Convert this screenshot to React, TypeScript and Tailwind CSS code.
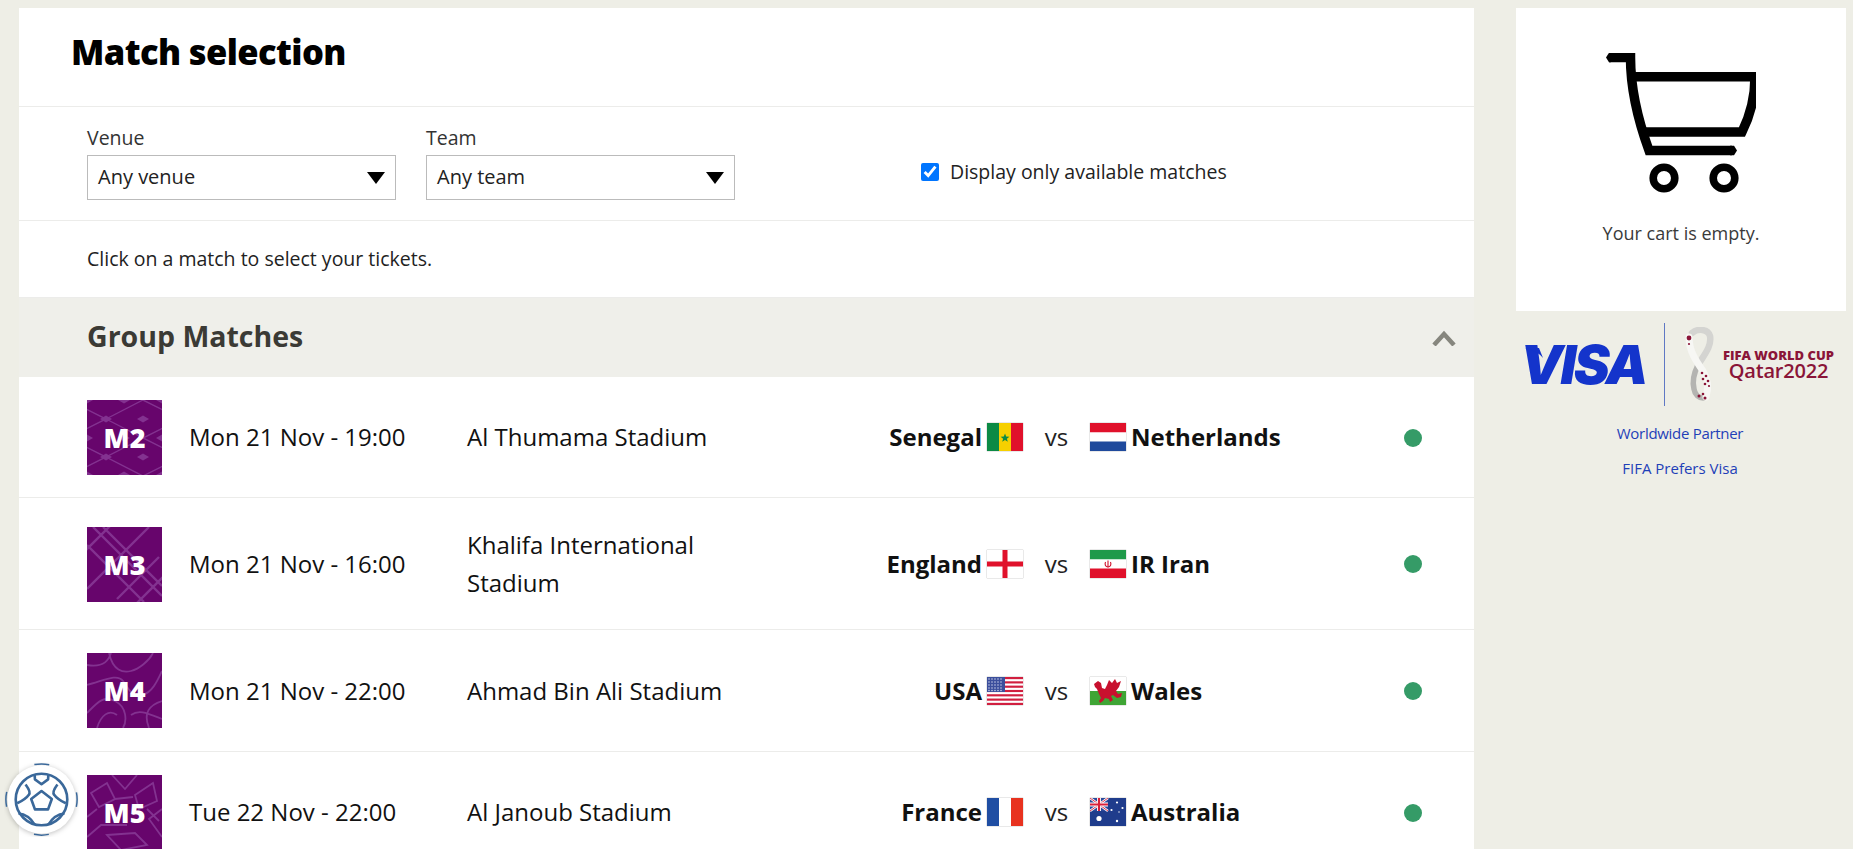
const OPEN = "font-['Open_Sans',sans-serif]"

function Flag({ code }: { code: string }) {
  const body: Record<string, React.ReactNode> = {
    sn: (
      <>
        <rect width="12" height="28" fill="#0b8a45" />
        <rect x="12" width="12" height="28" fill="#f6d000" />
        <rect x="24" width="12" height="28" fill="#e0112b" />
        <polygon points="18,10.5 19.2,13.6 22.4,13.7 19.9,15.7 20.8,18.8 18,17 15.2,18.8 16.1,15.7 13.6,13.7 16.8,13.6" fill="#0b8a45" />
      </>
    ),
    nl: (
      <>
        <rect width="36" height="9.5" fill="#e0112b" />
        <rect y="9.5" width="36" height="9" fill="#fff" />
        <rect y="18.5" width="36" height="9.5" fill="#1f4a9c" />
      </>
    ),
    en: (
      <>
        <rect width="36" height="28" fill="#fff" />
        <rect x="15.5" width="5" height="28" fill="#e0112b" />
        <rect y="11.5" width="36" height="5" fill="#e0112b" />
      </>
    ),
    ir: (
      <>
        <rect width="36" height="9.5" fill="#1f9a4a" />
        <rect y="9.5" width="36" height="9" fill="#fff" />
        <rect y="18.5" width="36" height="9.5" fill="#e0112b" />
        <path d="M18 10.5v7M15.5 12c-1 2.5 0 4.5 2 5M20.5 12c1 2.5 0 4.5-2 5" fill="none" stroke="#d0102b" strokeWidth="1.1" />
      </>
    ),
    us: (
      <>
        <rect width="36" height="28" fill="#fff" />
        {[0, 2, 4, 6, 8, 10, 12].map((i) => (
          <rect key={i} y={i * 2.154} width="36" height="2.154" fill="#d11f3f" />
        ))}
        <rect width="18" height="15" fill="#3c4f9c" />
        {[2, 5, 8, 11, 14].map((x) =>
          [2, 5, 8, 11, 13.5].map((y) => <circle key={x + "-" + y} cx={x} cy={y} r="0.7" fill="#dfe4f5" />),
        )}
      </>
    ),
    wa: (
      <>
        <rect width="36" height="14" fill="#fff" />
        <rect y="14" width="36" height="14" fill="#3fa535" />
        <path d="M4 7L8 4L11 6L12 11L15 12L17 8L19 3L22 6L25 2L27 6L31 4L29 10L26 14L28 17L32 16L31 20L27 21L23 18L21 19L23 23L20 25L19 22L15 21L13 24L10 26L9 24L11 21L9 17L7 12L5 10Z" fill="#c8102e" />
      </>
    ),
    fr: (
      <>
        <rect width="12" height="28" fill="#1f4ea3" />
        <rect x="12" width="12" height="28" fill="#fff" />
        <rect x="24" width="12" height="28" fill="#e8321f" />
      </>
    ),
    au: (
      <>
        <rect width="36" height="28" fill="#1f3c8c" />
        <rect width="18" height="13" fill="#2a4a9c" />
        <path d="M0 0l18 13M18 0L0 13" stroke="#fff" strokeWidth="2.4" />
        <path d="M0 0l18 13M18 0L0 13" stroke="#d9203a" strokeWidth="0.9" />
        <path d="M9 0v13M0 6.5h18" stroke="#fff" strokeWidth="4" />
        <path d="M9 0v13M0 6.5h18" stroke="#d9203a" strokeWidth="2.2" />
        <circle cx="9" cy="20.5" r="2.6" fill="#fff" />
        <circle cx="27" cy="4.5" r="1.1" fill="#fff" />
        <circle cx="27" cy="23" r="1.2" fill="#fff" />
        <circle cx="21.5" cy="12" r="1.1" fill="#fff" />
        <circle cx="32.5" cy="10" r="1.1" fill="#fff" />
        <circle cx="29" cy="14" r="0.7" fill="#fff" />
      </>
    ),
  }
  return (
    <svg viewBox="0 0 36 28" className="w-[36px] h-[28px] shrink-0 shadow-[0_0_1px_rgba(0,0,0,0.5)]">
      {body[code]}
    </svg>
  )
}

function TilePattern({ n }: { n: number }) {
  const stroke = "#833290"
  if (n === 2) {
    return (
      <svg viewBox="0 0 75 75" className="absolute inset-0 w-full h-full" fill="none" stroke={stroke} strokeWidth="1.4">
        <path d="M-19 0L19 19L-19 38L19 57L-19 76M19 19L56 0M19 19L56 38L19 57L56 76M56 0L94 19L56 38L94 57L56 76" />
        <g fill={stroke} stroke="none">
          {[0, 19, 38, 57, 75].map((y, i) =>
            [0, 19, 37, 56, 75]
              .filter((_, j) => (i + j) % 2 === 0)
              .map((x) => <polygon key={x + "-" + y} points={`${x - 6},${y} ${x},${y - 3.5} ${x + 6},${y} ${x},${y + 3.5}`} />),
          )}
        </g>
      </svg>
    )
  }
  if (n === 3) {
    return (
      <svg viewBox="0 0 75 75" className="absolute inset-0 w-full h-full" fill="none" stroke={stroke} strokeWidth="2.4">
        <path d="M6 0L75 69M16 0L75 59M0 18L57 75M-10 32L32 -10M10 52L52 10M30 72L72 30M44 82L82 44M0 62L62 0" />
      </svg>
    )
  }
  if (n === 4) {
    return (
      <svg viewBox="0 0 75 75" className="absolute inset-0 w-full h-full" fill="none" stroke={stroke} strokeWidth="1.8">
        <path d="M0 12C18 15 22 6 24 0M0 32C16 28 30 20 36 28S44 44 55 42S72 24 75 18M22 0C26 18 36 20 44 18S62 8 66 0M0 60C10 50 16 42 28 48S40 68 36 75M75 48C62 52 56 60 62 75M10 75C14 62 22 56 30 62M44 62C52 56 60 60 75 66" />
      </svg>
    )
  }
  return (
    <svg viewBox="0 0 75 75" className="absolute inset-0 w-full h-full" fill="none" stroke={stroke} strokeWidth="1.8">
      <path d="M4 18L20 8L28 24L12 32ZM48 20L66 8L70 26L52 34ZM25 0L38 14L50 0M0 42L10 34M75 34L62 44L75 62M0 62L14 50L40 50M20 60L48 58L60 70L34 75L20 60ZM60 34L72 46M28 24L46 22" />
    </svg>
  )
}

function Tile({ n, className }: { n: number; className: string }) {
  return (
    <div className={`relative w-[75px] h-[75px] shrink-0 bg-[#67056c] flex items-center justify-center ${className}`}>
      <TilePattern n={n} />
      <span className="relative text-white text-[27px] font-extrabold leading-none">M{n}</span>
    </div>
  )
}

// row heights and 1px nudges are read off the screenshot
const matches = [
  { n: 2, date: "Mon 21 Nov - 19:00", venue: "Al Thumama Stadium", home: "Senegal", hf: "sn", away: "Netherlands", af: "nl", row: "h-[121px] pt-[1px]", tile: "", text: "pb-[2px]" },
  { n: 3, date: "Mon 21 Nov - 16:00", venue: "Khalifa International Stadium", home: "England", hf: "en", away: "IR Iran", af: "ir", row: "h-[132px]", tile: "mt-[2px]", text: "" },
  { n: 4, date: "Mon 21 Nov - 22:00", venue: "Ahmad Bin Ali Stadium", home: "USA", hf: "us", away: "Wales", af: "wa", row: "h-[122px]", tile: "", text: "" },
  { n: 5, date: "Tue 22 Nov - 22:00", venue: "Al Janoub Stadium", home: "France", hf: "fr", away: "Australia", af: "au", row: "h-[122px]", tile: "", text: "pb-[2px]" },
]

function MatchRow({ m }: { m: (typeof matches)[number] }) {
  return (
    <div className={`${m.row} flex items-center pl-[68px] pr-[52px] border-b border-[#ececea] text-[24px] text-[#111]`}>
      <Tile n={m.n} className={m.tile} />
      <div className={`w-[278px] ml-[27px] shrink-0 ${m.text}`}>{m.date}</div>
      <div className={`w-[270px] shrink-0 leading-[38px] ${m.text}`}>{m.venue}</div>
      <div className={`flex items-center justify-end w-[286px] shrink-0 gap-[5px] font-bold ${m.text}`}>
        {m.home}
        <Flag code={m.hf} />
      </div>
      <div className={`w-[67px] text-center text-[#222] ${m.text}`}>vs</div>
      <div className={`flex items-center gap-[5px] font-bold ${m.text}`}>
        <Flag code={m.af} />
        {m.away}
      </div>
      <div className="ml-auto w-[18px] h-[18px] rounded-full bg-[#359b67]" />
    </div>
  )
}

function Select({ label, value }: { label: string; value: string }) {
  return (
    <div className="w-[309px]">
      <div className="text-[19.5px] leading-[25px] text-[#333]">{label}</div>
      <div className="mt-[5px] h-[45px] border border-[#bbb] pl-[10px] pr-[10px] flex items-center justify-between text-[20px] text-[#222]">
        <span className="pb-[2px]">{value}</span>
        <svg viewBox="0 0 18 12" className="w-[18px] h-[12px]">
          <polygon points="0,0 18,0 9,12" fill="#000" />
        </svg>
      </div>
    </div>
  )
}

function CartIcon() {
  return (
    <svg viewBox="0 0 150 140" className="w-[150px] h-[140px]" fill="none" stroke="#000" strokeWidth="9.5">
      <path d="M3 4.5H24.5C24.5 40 33 70 43 97.5H126" />
      <polygon points="124,92.8 128,92.8 131,97.5 128,102.2 124,102.2" fill="#000" stroke="none" />
      <polygon points="0,4.5 3,-0.2 5,-0.2 5,9.2 3,9.2" fill="#000" stroke="none" />
      <path d="M27 23.7H149C149 45 143 65 136 79H37" />
      <circle cx="58" cy="125" r="10.8" strokeWidth="7.6" />
      <circle cx="118" cy="125" r="10.8" strokeWidth="7.6" />
    </svg>
  )
}

function BallButton() {
  return (
    <div className="absolute left-[4px] top-[762px] w-[75px] h-[75px] rounded-full">
      <svg viewBox="0 0 80 80" className="w-full h-full" fill="none" stroke="#3a689a" strokeWidth="2.8" strokeLinejoin="round">
        <circle cx="40" cy="40" r="36.5" fill="#fff" stroke="none" className="drop-shadow-[0_1px_3px_rgba(0,0,0,0.25)]" />
        <circle cx="40" cy="40" r="38" strokeDasharray="16 43.7" strokeDashoffset="8" strokeWidth="1.6" />
        <circle cx="40" cy="40" r="27.5" />
        <polygon points="40,31 51,39.5 47,50.5 33,50.5 29,39.5" />
        <path d="M32.7 14L33 18.5L40 23.7L47 18.5L47.3 14" />
        <path d="M57 24Q51 32 53.5 35Q57 40 66 44" />
        <path d="M23 24Q29 32 26.5 35Q23 40 14 44" />
        <path d="M64.5 55Q54 56 47.5 66.5" />
        <path d="M15.5 55Q26 56 32.5 66.5" />
      </svg>
    </div>
  )
}

function Trophy() {
  return (
    <svg viewBox="0 0 32 75" className="w-[32px] h-[75px] shrink-0" fill="none" strokeLinecap="round">
      <path d="M8 6C14 1 24 2 26 9C28 19 20 28 14 38" stroke="#d4d4d1" strokeWidth="6.5" />
      <path d="M14 38C10 46 8 54 10 62C11 68 15 71 19 71" stroke="#b4b4b1" strokeWidth="5.5" />
      <path d="M5 10C5 24 12 34 19 44C24 52 25 60 22 70" stroke="#f7f7f4" strokeWidth="7" />
      <circle cx="5" cy="11" r="2.4" fill="#8a1538" />
      <circle cx="5" cy="17" r="1.1" fill="#8a1538" />
      <g fill="#8a1538">
        <circle cx="18" cy="46" r="1.3" />
        <circle cx="22" cy="49" r="1.3" />
        <circle cx="19" cy="52" r="1.3" />
        <circle cx="24" cy="54" r="1.3" />
        <circle cx="21" cy="57" r="1.3" />
        <circle cx="25" cy="59" r="1.1" />
        <circle cx="15" cy="69" r="1.5" />
        <circle cx="19" cy="67" r="1.3" />
        <circle cx="21" cy="71" r="1.5" />
      </g>
    </svg>
  )
}

function VisaBlock() {
  return (
    <div className="w-[330px]">
      <div className="mt-[12px] flex items-center h-[83px] pl-[4px]">
        <div className="relative w-[125px] shrink-0 text-right">
          <svg viewBox="0 0 20 10" className="absolute left-[5px] top-[10px] w-[20px] h-[10px]">
            <path d="M0 0H14L18 10C14 5 8 2 0 0Z" fill="#1434cb" />
          </svg>
          <span className="text-[#1434cb] text-[54px] leading-none font-black italic font-['Inter',sans-serif] tracking-[-2.5px]">VISA</span>
        </div>
        <div className="ml-[19px] w-px h-[83px] bg-[#5f78c4]" />
        <div className="ml-[19px]">
          <Trophy />
        </div>
        <div className="ml-[7px] text-[#8a1538] text-center">
          <div className="text-[13px] leading-[12px] font-extrabold whitespace-nowrap">FIFA WORLD CUP</div>
          <div className="text-[20px] leading-[20px] font-semibold tracking-[-0.2px]">Qatar2022</div>
        </div>
      </div>
      <div className="mt-[17px] pr-[2px] text-center text-[15px] leading-[20px] font-medium text-[#1f3fb8] tracking-[-0.3px]">Worldwide Partner</div>
      <div className="mt-[15px] pr-[2px] text-center text-[15px] leading-[20px] font-medium text-[#1f3fb8]">FIFA Prefers Visa</div>
    </div>
  )
}

export default function App() {
  return (
    <div className={`relative h-[849px] overflow-hidden bg-[#eeeee6] ${OPEN}`}>
      <div className="flex pl-[19px] pt-[8px]">
        <main className="w-[1455px] bg-white shrink-0">
          <div className="h-[99px] flex items-center pl-[52px] border-b border-[#ececea]">
            <h1 className="text-[34.5px] font-extrabold text-black tracking-[-0.6px] pb-[10px]">Match selection</h1>
          </div>
          <div className="h-[114px] border-b border-[#ececea] pl-[68px] pt-[18px] flex items-start">
            <div className="flex gap-[30px]">
              <Select label="Venue" value="Any venue" />
              <Select label="Team" value="Any team" />
            </div>
            <label className="ml-[186px] mt-[33px] h-[28px] flex items-center gap-[11px] text-[19.5px] text-[#222]">
              <input type="checkbox" defaultChecked className="w-[18px] h-[18px] accent-[#0075ff]" />
              Display only available matches
            </label>
          </div>
          <div className="h-[77px] border-b border-[#ececea] pl-[68px] flex items-center text-[19.5px] text-[#222]">
            Click on a match to select your tickets.
          </div>
          <div className="h-[79px] bg-[#efefea] pl-[68px] pr-[18px] flex items-center justify-between">
            <h2 className="text-[28.5px] font-bold text-[#3b3a35] pb-[3px]">Group Matches</h2>
            <svg viewBox="0 0 24 16" className="w-[24px] h-[16px]" fill="none" stroke="#86867e" strokeWidth="4.5">
              <path d="M2 15L12 4L22 15" />
            </svg>
          </div>
          {matches.map((m) => (
            <MatchRow key={m.n} m={m} />
          ))}
        </main>
        <aside className="ml-[42px] w-[330px] shrink-0">
          <div className="h-[303px] bg-white flex flex-col items-center pt-[45px]">
            <CartIcon />
            <p className="mt-[27px] text-[18px] leading-[26px] text-[#3a3a3a]">Your cart is empty.</p>
          </div>
          <VisaBlock />
        </aside>
      </div>
      <BallButton />
    </div>
  )
}
